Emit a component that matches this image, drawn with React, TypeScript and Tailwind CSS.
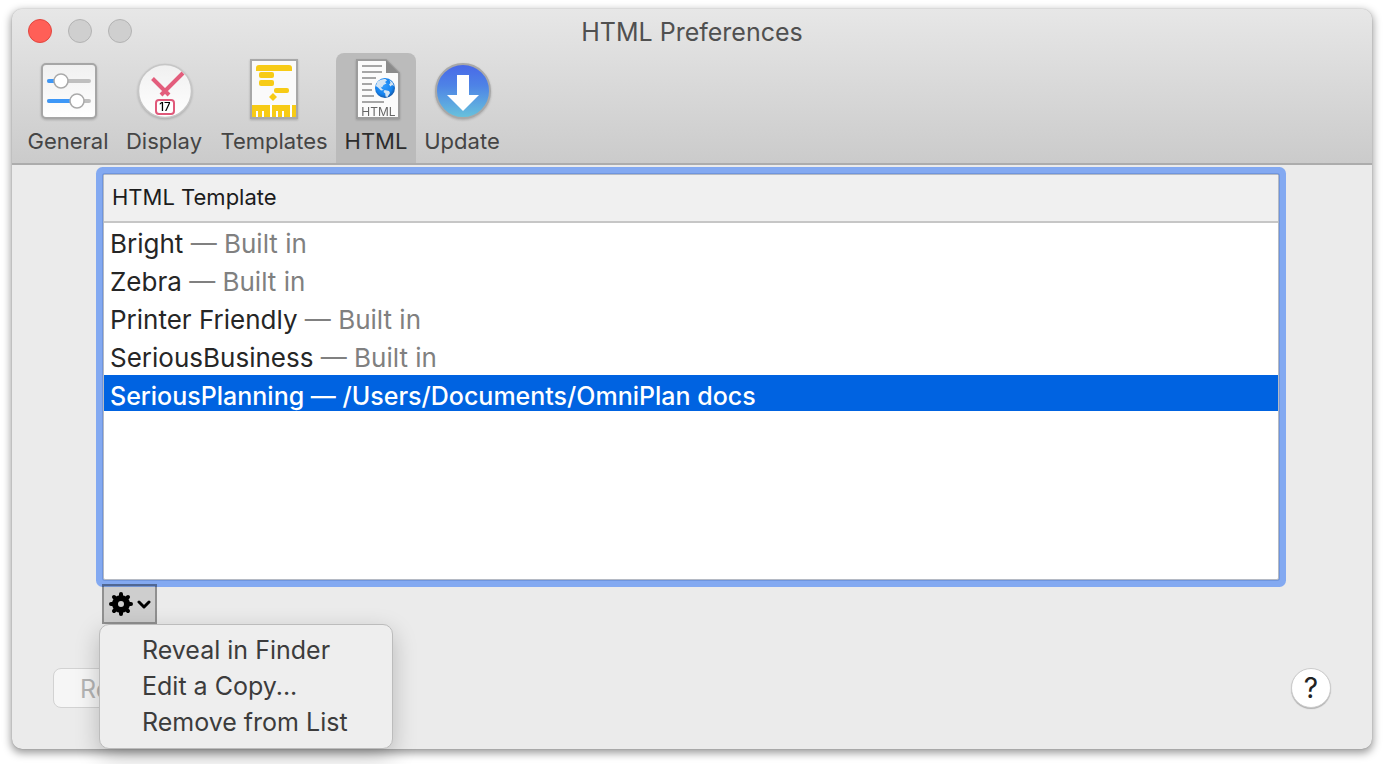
import type { ReactNode } from "react";

const templates = [
  { name: "Bright", source: "Built in" },
  { name: "Zebra", source: "Built in" },
  { name: "Printer Friendly", source: "Built in" },
  { name: "SeriousBusiness", source: "Built in" },
  { name: "SeriousPlanning", source: "/Users/Documents/OmniPlan docs", selected: true },
];

const menuItems = ["Reveal in Finder", "Edit a Copy...", "Remove from List"];

function Icon({ children }: { children: ReactNode }) {
  return (
    <svg viewBox="0 0 64 64" className="size-16 shrink-0 drop-shadow-[0_1px_1px_rgba(0,0,0,0.2)]" aria-hidden="true">
      {children}
    </svg>
  );
}

function GeneralIcon() {
  return (
    <Icon>
      <defs>
        <linearGradient id="panel" x1="0" y1="0" x2="0" y2="1">
          <stop offset="0" stopColor="#f0f0f0" />
          <stop offset="1" stopColor="#ffffff" />
        </linearGradient>
      </defs>
      <rect x="6" y="5" width="54" height="54" rx="4" fill="url(#panel)" stroke="#a6a6a6" strokeWidth="2" />
      <g strokeWidth="4" strokeLinecap="round">
        <path d="M13 22H53M13 42H53" stroke="#bfbfbf" />
        <path d="M13 22H22M13 42H38" stroke="#3d97f7" />
      </g>
      <g fill="#fff" stroke="#aaa" strokeWidth="1.5">
        <circle cx="25" cy="22" r="7" />
        <circle cx="41" cy="42" r="7" />
      </g>
    </Icon>
  );
}

function DisplayIcon() {
  return (
    <Icon>
      <circle cx="33" cy="32" r="26.5" fill="url(#panel)" stroke="#c6c6c6" strokeWidth="1.5" />
      <path d="M20.500 19.500L37 36M51 14L29 36" stroke="#e35d7c" strokeWidth="4" fill="none" />
      <rect x="24" y="41" width="18" height="14" rx="3" fill="#fff" stroke="#e0597a" strokeWidth="2" />
      <text x="33" y="52.300" textAnchor="middle" fontSize="11.500" fontWeight="500" fill="#000">17</text>
    </Icon>
  );
}

function TemplatesIcon() {
  return (
    <Icon>
      <rect x="9" y="1" width="46" height="58" fill="#fafafa" stroke="#a8a8a8" strokeWidth="2" />
      <g fill="#f7cb16">
        <path d="M17 6H47Q50 6 50 9V12H14V9Q14 6 17 6Z" />
        <rect x="17" y="13" width="15" height="6" rx="2" />
        <rect x="17" y="21" width="15" height="6" rx="2" />
        <rect x="32" y="29" width="15" height="5" rx="2" />
        <path d="M31 34L35 38L31 42L27 38Z" />
        <rect x="10" y="46" width="44" height="12" />
      </g>
      <path d="M29 46V58M49 46V58M15 52V58M21 52V58M35 52V58M41 52V58" stroke="#fff" strokeWidth="2" />
    </Icon>
  );
}

function HtmlIcon() {
  return (
    <Icon>
      <defs>
        <radialGradient id="globe" cx="0.45" cy="0.4" r="0.6">
          <stop offset="0" stopColor="#2f9bff" />
          <stop offset="0.7" stopColor="#1583ee" />
          <stop offset="1" stopColor="#1558a8" />
        </radialGradient>
      </defs>
      <path d="M13 1H42L55 14V59H13Z" fill="#fbfbfb" stroke="#9c9c9c" strokeWidth="2" />
      <path d="M42 1L55 14H42Z" fill="#8b8b8b" />
      <path d="M18 7H38M18 13H38M18 19H32M18 25H28M18 31H28M18 37H30M18 43H40" stroke="#a6a6a6" strokeWidth="2" />
      <circle cx="41" cy="29" r="10" fill="url(#globe)" />
      <g fill="#d3e4f4">
        <path d="M33.500 22.500Q37 19.500 41.500 20L43 21.500L41 23L42.500 24.500L39.500 26L38 28.500L36.500 27.500L38 30L40 31L37 31.500L34 28.500L31.800 27Z" />
        <path d="M40.500 31L45 32L46 34L43.500 38L41.500 37.500L41.300 34.500L39.500 33Z" />
        <path d="M45.500 21L48.500 23.500L50 27L48 26L46.500 27.500L45 25.500L46.500 24Z" />
      </g>
      <text x="34.500" y="57" textAnchor="middle" fontSize="12" fill="#666">HTML</text>
    </Icon>
  );
}

function UpdateIcon() {
  return (
    <Icon>
      <defs>
        <linearGradient id="sky" x1="0" y1="0" x2="0" y2="1">
          <stop offset="0" stopColor="#4867e8" />
          <stop offset="0.4" stopColor="#4e83e6" />
          <stop offset="1" stopColor="#68c3dc" />
        </linearGradient>
      </defs>
      <circle cx="33" cy="32" r="27" fill="url(#sky)" stroke="#a8a8a8" strokeWidth="2" />
      <path d="M27 16H39V36H49L33 52L17 36H27Z" fill="#fff" />
    </Icon>
  );
}

const tabs = [
  { label: "General", icon: <GeneralIcon />, width: "w-24" },
  { label: "Display", icon: <DisplayIcon />, width: "w-24" },
  { label: "Templates", icon: <TemplatesIcon />, width: "w-[124px]" },
  { label: "HTML", icon: <HtmlIcon />, width: "w-20", active: true },
  { label: "Update", icon: <UpdateIcon />, width: "w-[92px]" },
];

function GearIcon() {
  return (
    <svg viewBox="0 0 24 24" className="size-6" aria-hidden="true">
      <circle cx="12" cy="12" r="6" fill="none" stroke="#000" strokeWidth="6" />
      <g stroke="#000" strokeWidth="4" strokeLinecap="round">
        <path d="M12 2V5M12 19V22M2 12H5M19 12H22M5 5L7 7M17 17L19 19M19 5L17 7M7 17L5 19" />
      </g>
    </svg>
  );
}

export default function App() {
  return (
    <div className="min-h-screen bg-white px-3 pt-[9px] pb-[15px] font-['Inter',sans-serif] text-[#262626]">
      <main className="rounded-[10px] bg-[#ebebeb] shadow-[0_0_1px_0_rgba(0,0,0,0.35),0_3px_8px_1px_rgba(0,0,0,0.4)]">
        <header className="rounded-t-[10px] border-b-2 border-[#acacac] bg-linear-to-b from-[#e7e7e7] to-[#cbcbcb]">
          <div className="grid h-11 grid-cols-[1fr_auto_1fr] items-center px-4">
            <div className="flex gap-4">
              <button aria-label="Close" className="size-6 rounded-full border border-[#e2463f] bg-[#ff5f57]" />
              <button aria-label="Minimize" disabled className="size-6 rounded-full border border-[#b3b3b3] bg-[#cfcfcf]" />
              <button aria-label="Zoom" disabled className="size-6 rounded-full border border-[#b3b3b3] bg-[#cfcfcf]" />
            </div>
            <h1 className="pt-[2px] text-[25px] leading-9 text-[#505050]">HTML Preferences</h1>
          </div>
          <nav className="flex pl-2">
            {tabs.map((tab) => (
              <button
                key={tab.label}
                aria-current={tab.active ? "page" : undefined}
                className={`flex h-[110px] flex-col items-center rounded-t-lg pt-[6px] ${tab.width} ${
                  tab.active ? "bg-[#bbbbbb] text-[#2c2c2c]" : "text-[#454545]"
                }`}
              >
                {tab.icon}
                <span className="pt-1 text-[22px] leading-7">{tab.label}</span>
              </button>
            ))}
          </nav>
        </header>

        <section className="pt-[9px] pr-[93px] pl-[91px]">
          <div className="min-h-[406px] rounded-[2px] border border-[#b5bac4] bg-white shadow-[0_0_0_1px_#6f95dd,0_0_0_7px_#83a9f1]">
            <table className="w-full border-separate border-spacing-0 text-left">
              <thead>
                <tr>
                  <th className="h-12 border-b-2 border-[#c6c6c6] bg-[#f0f0f0] px-2 pb-[2px] text-[22px] font-normal text-[#1c1c1c]">
                    HTML Template
                  </th>
                </tr>
              </thead>
              <tbody>
                {templates.map((item) => (
                  <tr key={item.name} aria-selected={!!item.selected}>
                    <td
                      className={`h-[38px] border-b-2 border-transparent bg-clip-padding px-[6px] pt-[6px] leading-[30px] ${
                        item.selected ? "bg-[#0063e1] text-[25px] font-medium text-white" : "text-[26px]"
                      }`}
                    >
                      {item.name} <span className={item.selected ? "" : "text-[#808080]"}>— {item.source}</span>
                    </td>
                  </tr>
                ))}
              </tbody>
            </table>
          </div>
          <div className="relative mt-1 -ml-px w-fit">
            <button
              aria-label="Template actions"
              aria-expanded="true"
              className="flex h-10 w-[55px] items-center justify-center gap-1 border-2 border-black/30 bg-black/12"
            >
              <GearIcon />
              <svg viewBox="0 0 14 10" className="h-[10px] w-[14px]" aria-hidden="true">
                <path d="M2 3L7 8L12 3" fill="none" stroke="#000" strokeWidth="3" strokeLinecap="round" strokeLinejoin="round" />
              </svg>
            </button>
            <div
              role="menu"
              className="absolute top-10 -left-[3px] z-10 w-[294px] rounded-[10px] border border-[#bcbcbc] bg-[#eeeeee] pt-[7px] pb-2 shadow-[0_8px_24px_rgba(0,0,0,0.22)]"
            >
              {menuItems.map((label) => (
                <button
                  key={label}
                  role="menuitem"
                  className="block h-9 w-full pl-[42px] text-left text-[25px] leading-9 text-[#3c3c3c]"
                >
                  {label}
                </button>
              ))}
            </div>
          </div>
        </section>

        <footer className="flex justify-between px-[41px] pt-11 pb-[41px]">
          <button
            disabled
            className="h-10 w-[124px] rounded-lg border border-[#d2d2d2] bg-[#f6f6f6] pt-[2px] pl-[26px] text-left text-[25px] leading-9 text-[#b4b4b4]"
          >
            Reset
          </button>
          <button
            aria-label="Help"
            className="size-10 rounded-full border border-[#cccccc] bg-white text-[28px] leading-9 text-[#222222] shadow-[0_1px_1px_rgba(0,0,0,0.25)]"
          >
            ?
          </button>
        </footer>
      </main>
    </div>
  );
}
